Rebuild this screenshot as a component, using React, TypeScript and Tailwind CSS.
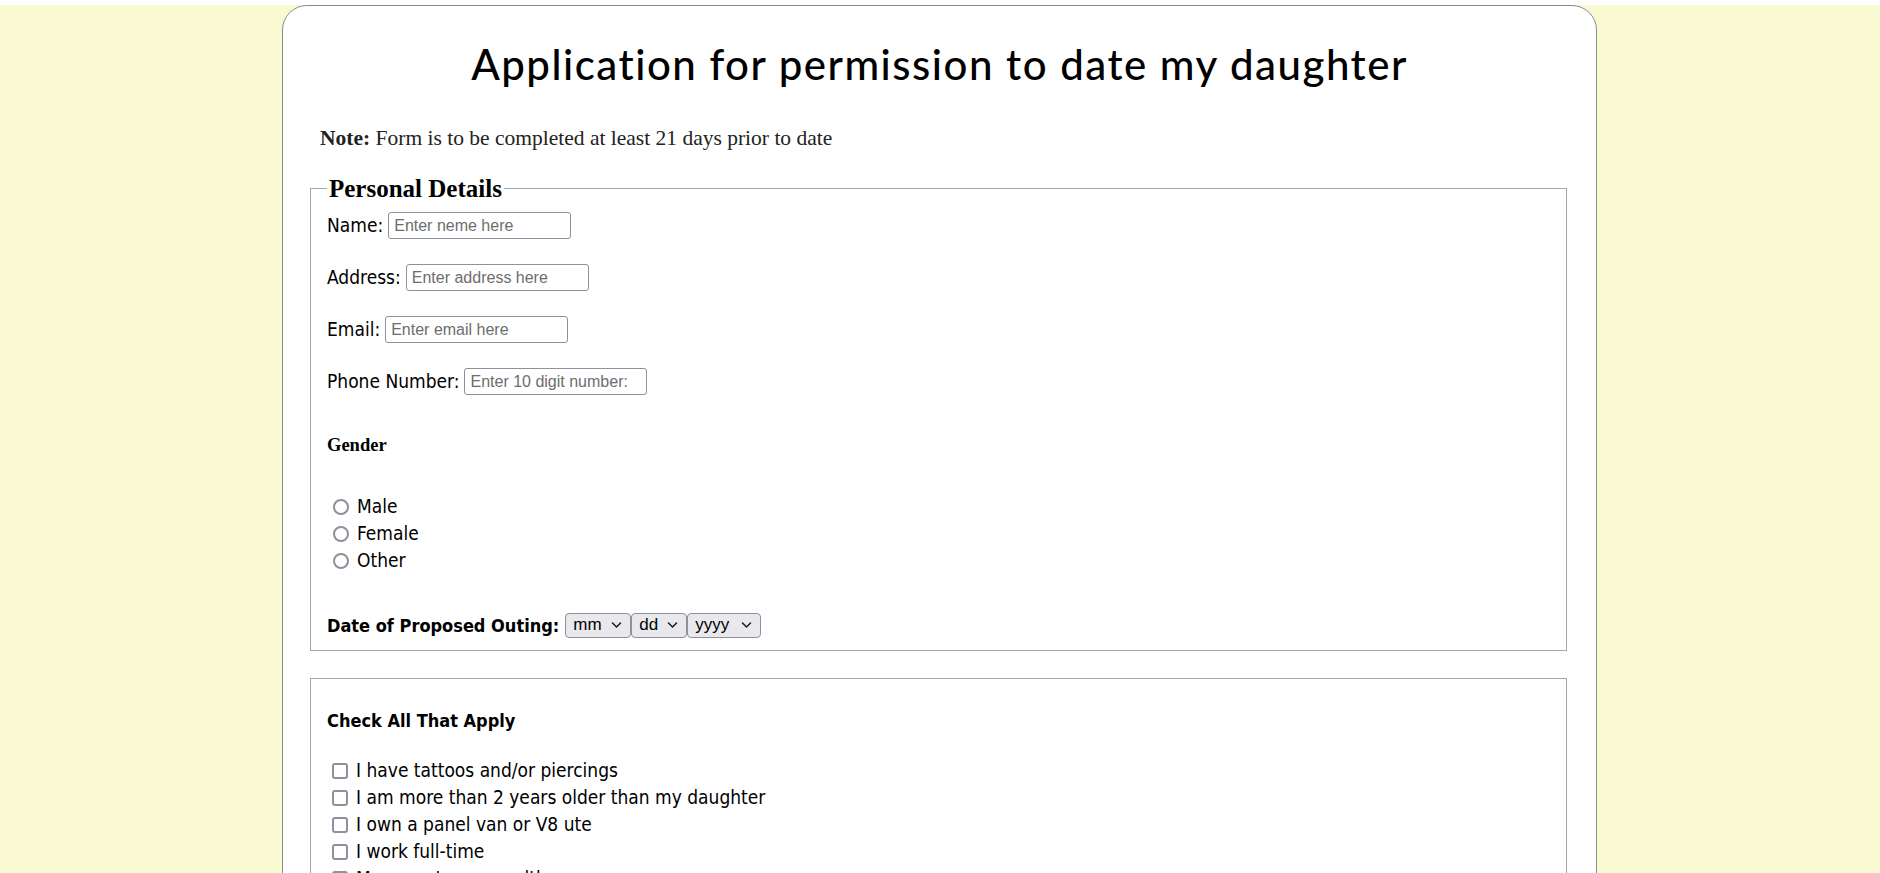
import React from "react";

const labelFont = "font-['Liberation_Sans_Narrow','DejaVu_Sans_Condensed',Roboto,sans-serif]";
const inputFont = "font-['Liberation_Sans',Arial,sans-serif]";

const textFields = [
    { label: "Name:", placeholder: "Enter neme here" },
    { label: "Address:", placeholder: "Enter address here" },
    { label: "Email:", placeholder: "Enter email here" },
    { label: "Phone Number:", placeholder: "Enter 10 digit number:" },
];

const genders = ["Male", "Female", "Other"];

const checks = [
    "I have tattoos and/or piercings",
    "I am more than 2 years older than my daughter",
    "I own a panel van or V8 ute",
    "I work full-time",
    "My parents are wealthy",
    "I have a criminal record",
];

function Chevron() {
    return (
        <svg className="h-[8px] w-[11px] shrink-0" viewBox="0 0 11 8" fill="none">
            <path d="M1.5 2l4 4 4-4" stroke="#1a1a1a" strokeWidth="1.5" strokeLinecap="round" strokeLinejoin="round" />
        </svg>
    );
}

function FakeSelect({ value, width }: { value: string; width: string }) {
    return (
        <div
            className={`${width} ${inputFont} flex h-[25px] items-center justify-between rounded-[4px] border border-[#8f8f9d] bg-[#e9e9ed] pl-[7px] pr-[8px] text-[17px] font-normal text-black`}
        >
            <span>{value}</span>
            <Chevron />
        </div>
    );
}

export default function App() {
    return (
        <div className="bg-white pt-[5px]">
            <div className="min-h-[900px] bg-[#fafad2]">
                <div className="ml-[282px] min-h-[1000px] w-[1315px] rounded-[25px] border border-[#8a8a8a] bg-white">
                    <h1 className="pt-[30px] text-center font-['Lato',sans-serif] text-[42px] font-medium leading-[56px] tracking-[1.5px] text-black">
                        Application for permission to date my daughter
                    </h1>

                    <p className="mt-[32px] pl-[37px] font-['Liberation_Serif',serif] text-[21.5px] leading-[28px] text-[#222]">
                        <span className="font-bold">Note:</span> Form is to be completed at least 21 days prior to date
                    </p>

                    <div className="pl-[27px] pr-[29px] pt-[24px]">
                        <fieldset className={`border border-[#a6a6a6] px-[16px] pb-[12px] ${labelFont}`}>
                            <legend className="px-[2px] font-['Liberation_Serif',serif] text-[25px] font-bold leading-[25px] text-black">
                                Personal Details
                            </legend>

                            {textFields.map((f, i) => (
                                <div
                                    key={f.label}
                                    className={`flex h-[27px] items-center gap-[5px] text-[19px] text-black ${i === 0 ? "mt-[11px]" : "mt-[25px]"}`}
                                >
                                    <span>{f.label}</span>
                                    <input
                                        type="text"
                                        placeholder={f.placeholder}
                                        className={`${inputFont} h-[27px] w-[183px] rounded-[3px] border border-[#8f8f9d] px-[5px] text-[16px] text-black outline-none placeholder:text-[#6d6d6d]`}
                                    />
                                </div>
                            ))}

                            <h4 className="mt-[38px] h-[24px] font-['Liberation_Serif',serif] text-[18.5px] font-bold leading-[24px] text-black">
                                Gender
                            </h4>

                            <div className="mt-[36px] pl-[6px]">
                                {genders.map((g) => (
                                    <label key={g} className="flex h-[27px] items-center gap-[8px] text-[19px] text-black">
                                        <input
                                            type="radio"
                                            name="gender"
                                            className="h-[16px] w-[16px] appearance-none rounded-full border-2 border-[#8f8f9d] bg-white"
                                        />
                                        {g}
                                    </label>
                                ))}
                            </div>

                            <div className="mt-[38px] flex h-[26px] items-center text-[18px] font-semibold text-black">
                                <span className="mr-[6px]">Date of Proposed Outing:</span>
                                <div className="flex">
                                    <FakeSelect value="mm" width="w-[66px]" />
                                    <FakeSelect value="dd" width="w-[56px]" />
                                    <FakeSelect value="yyyy" width="w-[74px]" />
                                </div>
                            </div>
                        </fieldset>

                        <fieldset className={`mt-[27px] border border-[#a6a6a6] px-[16px] pb-[12px] pt-[30px] ${labelFont}`}>
                            <h3 className="h-[24px] text-[18px] font-semibold leading-[24px] text-black">
                                Check All That Apply
                            </h3>
                            <div className="mt-[24px] pl-[5px]">
                                {checks.map((c) => (
                                    <label key={c} className="flex h-[27px] items-center gap-[8px] text-[19px] text-black">
                                        <input
                                            type="checkbox"
                                            className="h-[16px] w-[16px] appearance-none rounded-[3px] border-2 border-[#8f8f9d] bg-white"
                                        />
                                        {c}
                                    </label>
                                ))}
                            </div>
                        </fieldset>
                    </div>
                </div>
            </div>
        </div>
    );
}
